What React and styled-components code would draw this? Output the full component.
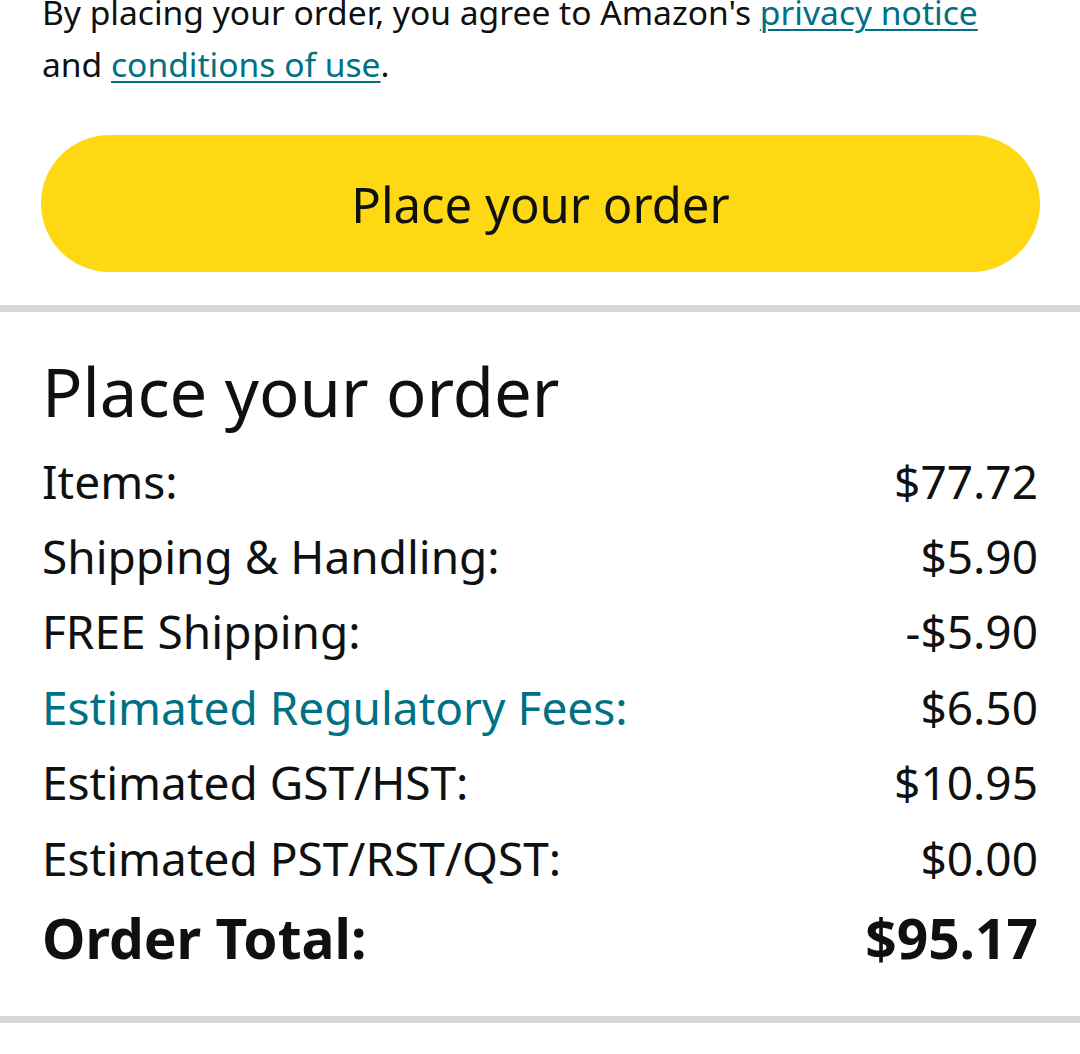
import React from "react";
import styled, { createGlobalStyle } from "styled-components";

const Global = createGlobalStyle`
  html, body { margin: 0; padding: 0; background: #fff; }
  body { font-family: "Noto Sans", Roboto, Arial, sans-serif; color: #0f1111; overflow: hidden; }
`;

const Page = styled.div`
  width: 1080px;
  height: 1054px;
  overflow: hidden;
  background: #fff;
`;

const Top = styled.div`
  padding: 0 42px 45px;
  margin-top: -14px;
`;

const Notice = styled.p`
  margin: 0;
  font-size: 33.6px;
  line-height: 52px;
  color: #0f1111;
  white-space: nowrap;
`;

const Link = styled.a`
  color: #007185;
  text-decoration: underline;
  text-decoration-thickness: 2px;
  text-underline-offset: 4px;
`;

const Button = styled.button`
  display: block;
  width: 999px;
  height: 137px;
  margin: 0 0 0 41px;
  border: none;
  border-radius: 69px;
  background: #fdd813;
  color: #0f1111;
  font-family: inherit;
  font-size: 49px;
  padding: 0;
`;

const Divider = styled.div`
  height: 7px;
  background: #d5d9d9;
  margin-top: ${(p) => p.$top}px;
`;

const Summary = styled.section`
  padding: 35px 42px 0;
`;

const Heading = styled.h2`
  margin: 0 0 8px;
  font-size: 67px;
  font-weight: 400;
  line-height: 88px;
`;

const Rows = styled.div`
  display: flex;
  flex-direction: column;
`;

const Row = styled.div`
  display: flex;
  justify-content: space-between;
  align-items: center;
  height: ${(p) => (p.$total ? 85 : 75.4)}px;
  font-size: ${(p) => (p.$total ? 55 : 46)}px;
  font-weight: ${(p) => (p.$total ? 700 : 400)};
  color: ${(p) => (p.$link ? "#007185" : "#0f1111")};
`;

const Value = styled.span`
  color: #0f1111;
`;

const rows = [
  ["Items:", "$77.72"],
  ["Shipping & Handling:", "$5.90"],
  ["FREE Shipping:", "-$5.90"],
  ["Estimated Regulatory Fees:", "$6.50", true],
  ["Estimated GST/HST:", "$10.95"],
  ["Estimated PST/RST/QST:", "$0.00"],
];

export default function App() {
  return (
    <Page>
      <Global />
      <Top>
        <Notice>
          By placing your order, you agree to Amazon's <Link>privacy notice</Link>
          <br />
          and <Link>conditions of use</Link>.
        </Notice>
      </Top>
      <Button>Place your order</Button>
      <Divider $top={33} />
      <Summary>
        <Heading>Place your order</Heading>
        <Rows>
          {rows.map(([l, v, link]) => (
            <Row key={l} $link={link}>
              <span>{l}</span>
              <Value>{v}</Value>
            </Row>
          ))}
          <Row $total>
            <span>Order Total:</span>
            <Value>$95.17</Value>
          </Row>
        </Rows>
      </Summary>
      <Divider $top={36} />
    </Page>
  );
}
